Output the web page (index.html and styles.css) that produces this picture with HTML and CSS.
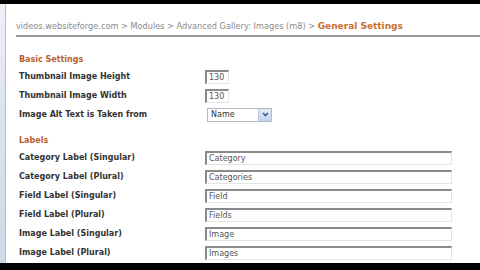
FILE: index.html
```html
<!DOCTYPE html>
<html lang="en">
<head>
    <meta charset="UTF-8">
    <title>General Settings</title>
    <link rel="stylesheet" href="styles.css">
</head>
<body>
    <div class="screen">
        <div class="side"></div>
        <div class="page">
            <div class="crumbs">
                <span class="trail">videos.websiteforge.com &gt; Modules &gt; Advanced Gallery: Images (m8) &gt;&nbsp;</span><span class="current">General Settings</span>
            </div>

            <h2>Basic Settings</h2>
            <div class="row">
                <label>Thumbnail Image Height</label>
                <input class="field small" type="text" value="130">
            </div>
            <div class="row">
                <label>Thumbnail Image Width</label>
                <input class="field small" type="text" value="130">
            </div>
            <div class="row">
                <label>Image Alt Text is Taken from</label>
                <div class="select">
                    <span>Name</span>
                    <span class="arrow">
                        <svg width="9" height="9" viewBox="0 0 9 9"><path d="M2 3l2.5 2.5L7 3" fill="none" stroke="#3a5a9c" stroke-width="1.6"/></svg>
                    </span>
                </div>
            </div>

            <h2 class="labels">Labels</h2>
            <div class="row">
                <label>Category Label (Singular)</label>
                <input class="field wide" type="text" value="Category">
            </div>
            <div class="row">
                <label>Category Label (Plural)</label>
                <input class="field wide" type="text" value="Categories">
            </div>
            <div class="row">
                <label>Field Label (Singular)</label>
                <input class="field wide" type="text" value="Field">
            </div>
            <div class="row">
                <label>Field Label (Plural)</label>
                <input class="field wide" type="text" value="Fields">
            </div>
            <div class="row">
                <label>Image Label (Singular)</label>
                <input class="field wide" type="text" value="Image">
            </div>
            <div class="row">
                <label>Image Label (Plural)</label>
                <input class="field wide" type="text" value="Images">
            </div>
        </div>
    </div>
</body>
</html>
```

FILE: styles.css
```css
body {
    margin: 0;
    background: #000;
    font-family: "DejaVu Sans", Verdana, sans-serif;
}
.screen {
    width: 480px;
    height: 259px;
    margin-top: 4px;
    background: #fff;
    display: flex;
    overflow: hidden;
}
.side {
    width: 5px;
    flex: none;
    background: linear-gradient(180deg, #eef1f6 0%, #dde3ee 40%, #cfd8ea 100%);
    border-right: 1px solid #b8bcc4;
}
.page {
    flex: 1;
    padding: 0 0 0 10px;
}
.crumbs {
    height: 33px;
    display: flex;
    align-items: flex-end;
    padding-bottom: 4px;
    box-sizing: border-box;
    border-bottom: 2px solid #9a9a9a;
    white-space: nowrap;
}
.trail {
    color: #8a8a8a;
    font-size: 8.2px;
}
.current {
    color: #c8702a;
    font-size: 9px;
    font-weight: bold;
}
h2 {
    margin: 18px 0 3px 3px;
    font-size: 8px;
    font-weight: bold;
    color: #b8622e;
}
h2.labels {
    margin-top: 12px;
}
.row {
    height: 19px;
    display: flex;
    align-items: center;
    padding-left: 3px;
}
.row label {
    width: 186px;
    font-size: 8px;
    font-weight: bold;
    color: #333;
}
.field {
    height: 14px;
    box-sizing: border-box;
    padding: 0 2px;
    margin: 0;
    border: 1px solid #e4e4e4;
    border-top: 2px solid #8a8a8a;
    border-left: 2px solid #8a8a8a;
    font-family: "DejaVu Sans", Verdana, sans-serif;
    font-size: 8px;
    color: #555;
    background: #fff;
    outline: none;
}
.small {
    width: 24px;
}
.wide {
    width: 247px;
}
.select {
    width: 65px;
    height: 14px;
    margin-left: 2px;
    box-sizing: border-box;
    border: 1px solid #b4b8c0;
    display: flex;
    align-items: center;
    justify-content: space-between;
    font-size: 8px;
    color: #333;
    padding-left: 3px;
}
.arrow {
    width: 12px;
    height: 12px;
    display: flex;
    align-items: center;
    justify-content: center;
    background: linear-gradient(180deg, #e4ecf8, #c6d4ee);
    border-left: 1px solid #b8c4d8;
}
```
